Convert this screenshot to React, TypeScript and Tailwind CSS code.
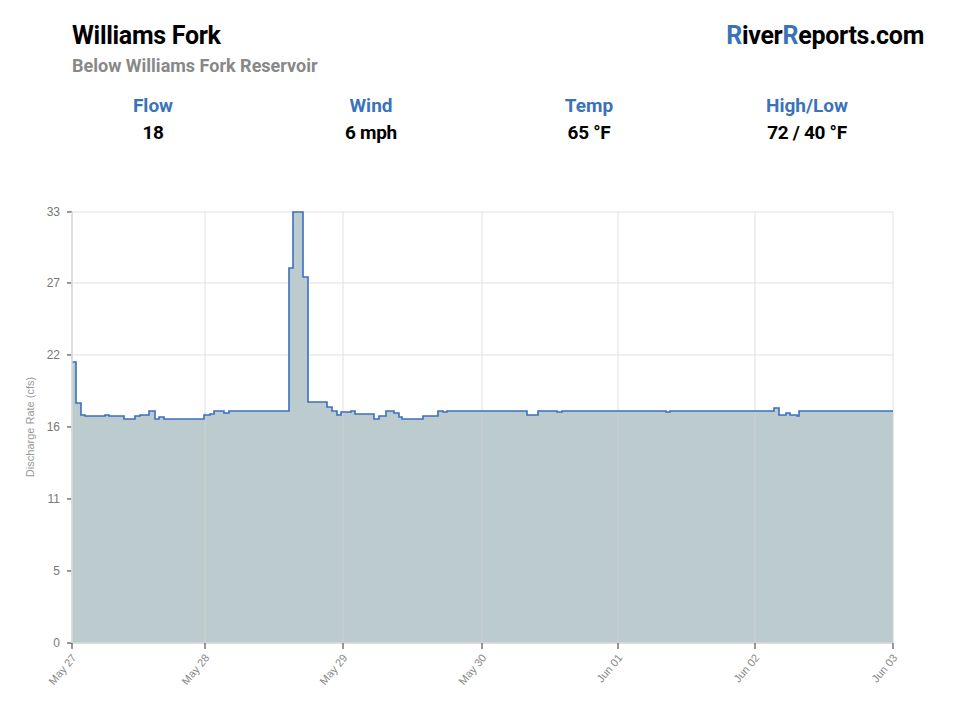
import React from "react";

const pts: [number, number][] = [
  [72,362],[76,403],[81,415],[85,416],[105,415],[109,416],[124,419],[135,416],[140,415],[149,411],[155,419],[159,417],[164,419],[200,419],[204,415],[210,414],[214,411],[224,413],[229,411],[237,411],[289,411],[289,268],[293,268],[293,212],[303,212],[303,277],[308,277],[308,402],[323,402],[327,407],[332,411],[337,415],[341,412],[351,411],[355,414],[372,414],[374,419],[379,416],[386,411],[394,413],[399,417],[402,419],[421,419],[423,416],[436,416],[438,411],[443,412],[447,411],[525,411],[527,415],[536,415],[538,411],[555,411],[557,412],[562,411],[664,411],[666,412],[670,411],[772,411],[774,408],[778,408],[779,415],[784,415],[786,413],[790,415],[797,416],[799,411],[893,411],
];

function stepPath() {
  let d = `M${pts[0][0]},${pts[0][1]}`;
  for (let i = 1; i < pts.length; i++) {
    d += ` H${pts[i][0]} V${pts[i][1]}`;
  }
  return d;
}

const ys = [[33,212],[27,283],[22,355],[16,427],[11,499],[5,571],[0,643]];
const xs = [[72,"May 27"],[205,"May 28"],[343,"May 29"],[482,"May 30"],[618,"Jun 01"],[755,"Jun 02"],[893,"Jun 03"]] as [number,string][];

export default function App() {
  const line = stepPath();
  const area = line + " V643 H72 Z";
  return (
    <div className="w-[960px] h-[720px] bg-white relative" style={{ fontFamily: "Roboto, 'Liberation Sans', Arial, sans-serif" }}>
      <div className="flex justify-between items-start pl-[72px] pr-[36px] pt-[20px]">
        <div>
          <div className="text-[25px] font-bold text-black leading-[32px] tracking-[-0.3px]">Williams Fork</div>
          <div className="text-[18px] font-bold text-[#888] leading-[26px] mt-[1px]">Below Williams Fork Reservoir</div>
        </div>
        <div className="text-[25px] font-bold text-black leading-[32px] tracking-[-0.3px]">
          <span className="text-[#3a73b9]">R</span>iver<span className="text-[#3a73b9]">R</span>eports.com
        </div>
      </div>
      <div className="grid grid-cols-4 px-[44px] mt-[14px] text-center text-[19px] font-bold">
        {[["Flow","18"],["Wind","6 mph"],["Temp","65 °F"],["High/Low","72 / 40 °F"]].map(([a,b]) => (
          <div key={a}>
            <div className="text-[#3a73b9] leading-[26px]">{a}</div>
            <div className="text-black leading-[28px] tracking-[-0.3px]">{b}</div>
          </div>
        ))}
      </div>
      <svg className="absolute left-0 top-0" width="960" height="720" style={{ fontFamily: "'Liberation Sans', Arial, sans-serif" }}>
        {ys.map(([v,y]) => (
          <g key={v}>
            <line x1={72} x2={893} y1={y} y2={y} stroke="#e0e0e0" />
            <line x1={67} x2={72} y1={y} y2={y} stroke="#333" />
            <text x={60} y={y+4} fontSize="12" fill="#777" textAnchor="end">{v}</text>
          </g>
        ))}
        {xs.map(([x]) => (
          <line key={x} x1={x} x2={x} y1={212} y2={643} stroke="#e0e0e0" />
        ))}
        <path d={area} fill="#bccbce" />
        {xs.map(([x]) => (
          <line key={"g"+x} x1={x} x2={x} y1={412} y2={643} stroke="#cfd6d0" strokeWidth="0.8" />
        ))}
        <path d={line} fill="none" stroke="#3b6fc0" strokeWidth="1.6" />
        <line x1={72} x2={893} y1={643} y2={643} stroke="#d8d8d8" strokeWidth="1.5" />
        <line x1={72} x2={72} y1={212} y2={643} stroke="#d8d8d8" strokeWidth="1.5" />
        {xs.map(([x,l]) => (
          <g key={l}>
            <line x1={x} x2={x} y1={643} y2={649} stroke="#333" />
            <text x={0} y={0} fontSize="11" fill="#888" textAnchor="end" transform={`translate(${x+5},${658}) rotate(-50)`}>{l}</text>
          </g>
        ))}
        <text fontSize="11" fill="#999" textAnchor="middle" transform="translate(34,427) rotate(-90)">Discharge Rate (cfs)</text>
      </svg>
    </div>
  );
}
